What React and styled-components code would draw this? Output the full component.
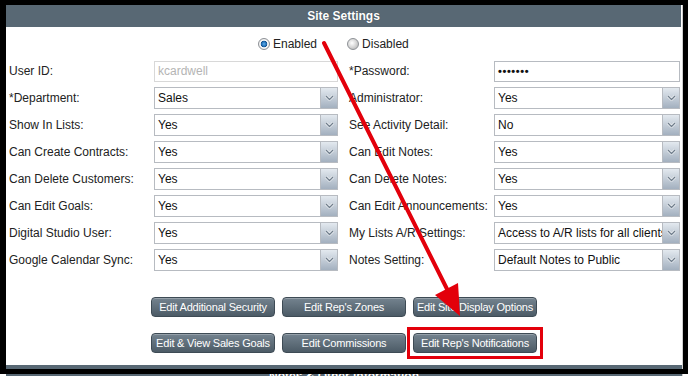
import React from "react";
import styled, { createGlobalStyle } from "styled-components";

const GlobalStyle = createGlobalStyle`
  html, body {
    margin: 0;
    padding: 0;
    background: #fff;
  }
  body {
    font-family: "Liberation Sans", Arial, sans-serif;
  }
`;

const leftFields = [
  { label: "User ID:", kind: "input", value: "kcardwell", muted: true },
  { label: "*Department:", value: "Sales" },
  { label: "Show In Lists:", value: "Yes" },
  { label: "Can Create Contracts:", value: "Yes" },
  { label: "Can Delete Customers:", value: "Yes" },
  { label: "Can Edit Goals:", value: "Yes" },
  { label: "Digital Studio User:", value: "Yes" },
  { label: "Google Calendar Sync:", value: "Yes" },
];

const rightFields = [
  { label: "*Password:", kind: "password", value: "•••••••" },
  { label: "Administrator:", value: "Yes" },
  { label: "See Activity Detail:", value: "No" },
  { label: "Can Edit Notes:", value: "Yes" },
  { label: "Can Delete Notes:", value: "Yes" },
  { label: "Can Edit Announcements:", value: "Yes" },
  { label: "My Lists A/R Settings:", value: "Access to A/R lists for all clients" },
  { label: "Notes Setting:", value: "Default Notes to Public" },
];

const buttonRows = [
  ["Edit Additional Security", "Edit Rep's Zones", "Edit Site Display Options"],
  ["Edit & View Sales Goals", "Edit Commissions", "Edit Rep's Notifications"],
];

const Chevron = () => (
  <svg width="9" height="6" viewBox="0 0 9 6">
    <path d="M1 1 L4.5 4.5 L8 1" fill="none" stroke="#f4f6f8" strokeWidth="2.6" />
    <path d="M1 1 L4.5 4.5 L8 1" fill="none" stroke="#6f7d8c" strokeWidth="1.3" />
  </svg>
);

const Field = ({ label, kind, value, muted }) => (
  <FieldPair>
    <Label>{label}</Label>
    {kind === "input" || kind === "password" ? (
      <TextBox $muted={muted} $password={kind === "password"}>
        {value}
      </TextBox>
    ) : (
      <SelectBox>
        <SelectValue>{value}</SelectValue>
        <ArrowCell>
          <Chevron />
        </ArrowCell>
      </SelectBox>
    )}
  </FieldPair>
);

const App = () => {
  return (
    <>
      <GlobalStyle />
      <Screen>
        <Panel>
          <Header $inset>Site Settings</Header>
          <Body>
            <RadioRow>
              <RadioOption>
                <Radio $on />
                Enabled
              </RadioOption>
              <RadioOption>
                <Radio />
                Disabled
              </RadioOption>
            </RadioRow>

            <FieldGrid>
              {leftFields.map((f, i) => (
                <React.Fragment key={f.label}>
                  <Field {...f} />
                  <Field {...rightFields[i]} />
                </React.Fragment>
              ))}
            </FieldGrid>

            <Buttons>
              {buttonRows.map((row, r) => (
                <ButtonRow key={r}>
                  {row.map((text, c) =>
                    r === 1 && c === 2 ? (
                      <Highlight key={text}>
                        <ActionButton>{text}</ActionButton>
                      </Highlight>
                    ) : (
                      <ActionButton key={text}>{text}</ActionButton>
                    )
                  )}
                </ButtonRow>
              ))}
            </Buttons>
          </Body>
          <Header>Notes &amp; Other Information</Header>
        </Panel>

        <Frame />
        <Annotation width="688" height="376" viewBox="0 0 688 376">
          <line
            x1="324"
            y1="43"
            x2="448"
            y2="291"
            stroke="#e3000b"
            strokeWidth="4"
            strokeLinecap="round"
          />
          <polygon points="460,316 435,295 458,283" fill="#e3000b" />
        </Annotation>
      </Screen>
    </>
  );
};

export default App;

const Screen = styled.div`
  position: relative;
  width: 688px;
  height: 376px;
  overflow: hidden;
  box-sizing: border-box;
  padding-top: 5px;
  background: #fff;
`;

const Panel = styled.div`
  margin: 0 5px 0 6px;
  border-right: 1px solid #cfcfcf;
  background: #fff;
`;

const Header = styled.div`
  height: 22px;
  margin-right: ${(props) => (props.$inset ? "1px" : "0")};
  background: #586874;
  color: #fff;
  font-size: 12px;
  font-weight: bold;
  display: flex;
  align-items: center;
  justify-content: center;
  text-shadow: 0 0 1px rgba(0, 0, 0, 0.35);
`;

const Body = styled.div`
  padding: 8px 0 12px 3px;
`;

const RadioRow = styled.div`
  height: 18px;
  display: flex;
  align-items: center;
  gap: 30px;
  padding-left: 249px;
  margin-bottom: 7px;
  font-size: 12px;
  color: #222;
`;

const RadioOption = styled.label`
  display: flex;
  align-items: center;
  gap: 3px;
`;

const Radio = styled.span`
  width: 12px;
  height: 12px;
  box-sizing: border-box;
  border-radius: 50%;
  border: 1px solid #8d9196;
  background: ${(props) =>
    props.$on
      ? "radial-gradient(circle, #5fb0ee 0, #1d67ad 2.6px, #0f3f70 3.2px, #fff 3.6px, #dcdcdc 6px)"
      : "radial-gradient(circle at 40% 40%, #ffffff 0, #e2e2e2 3px, #c4c4c4 6px)"};
`;

const FieldGrid = styled.div`
  display: grid;
  grid-template-columns: 329px 331px;
  column-gap: 11px;
  row-gap: 5px;
`;

const FieldPair = styled.div`
  display: grid;
  grid-template-columns: 145px minmax(0, 1fr);
  align-items: center;
  height: 22px;
`;

const Label = styled.span`
  font-size: 12px;
  color: #222;
  white-space: nowrap;
`;

const SelectBox = styled.div`
  height: 22px;
  min-width: 0;
  box-sizing: border-box;
  border: 1px solid #b7bbc1;
  background: #fff;
  display: flex;
  align-items: stretch;
  font-size: 12px;
  color: #111;
`;

const SelectValue = styled.span`
  flex: 1 1 0;
  min-width: 0;
  padding-left: 3px;
  overflow: hidden;
  white-space: nowrap;
  line-height: 20px;
`;

const ArrowCell = styled.span`
  flex: 0 0 16px;
  border-left: 1px solid #b7bbc1;
  background: linear-gradient(#e3e9ef, #a3b0bf);
  display: flex;
  align-items: center;
  justify-content: center;
`;

const TextBox = styled.div`
  height: 21px;
  box-sizing: border-box;
  border: 1px solid ${(props) => (props.$muted ? "#d8d8d8" : "#b7bbc1")};
  background: #fff;
  display: flex;
  align-items: center;
  padding-left: 3px;
  font-size: ${(props) => (props.$password ? "11px" : "12px")};
  font-weight: ${(props) => (props.$password ? "bold" : "normal")};
  letter-spacing: ${(props) => (props.$password ? "0.6px" : "0")};
  color: ${(props) => (props.$muted ? "#b4b4b4" : "#111")};
`;

const Buttons = styled.div`
  margin-top: 26px;
  display: flex;
  flex-direction: column;
  gap: 16px;
`;

const ButtonRow = styled.div`
  display: flex;
  justify-content: center;
  gap: 7px;
  padding-right: 3px;
`;

const Highlight = styled.span`
  display: flex;
  margin: -6px;
  padding: 3px;
  border: 3px solid #e3000b;
`;

const ActionButton = styled.button`
  width: 124px;
  height: 20px;
  padding: 0;
  box-sizing: border-box;
  border: 1px solid #3e4b55;
  border-radius: 4px;
  background: linear-gradient(#74838f, #4c5b66);
  box-shadow: inset 0 1px 0 rgba(255, 255, 255, 0.25);
  color: #fff;
  font-family: "Liberation Sans", Arial, sans-serif;
  font-size: 11px;
  letter-spacing: -0.2px;
  white-space: nowrap;
  overflow: hidden;
`;

const Frame = styled.div`
  position: absolute;
  left: 0;
  top: 0;
  width: 688px;
  height: 374px;
  box-sizing: border-box;
  border-style: solid;
  border-color: #000;
  border-width: 5px 5px 5px 6px;
  pointer-events: none;
`;

const Annotation = styled.svg`
  position: absolute;
  left: 0;
  top: 0;
  pointer-events: none;
`;
